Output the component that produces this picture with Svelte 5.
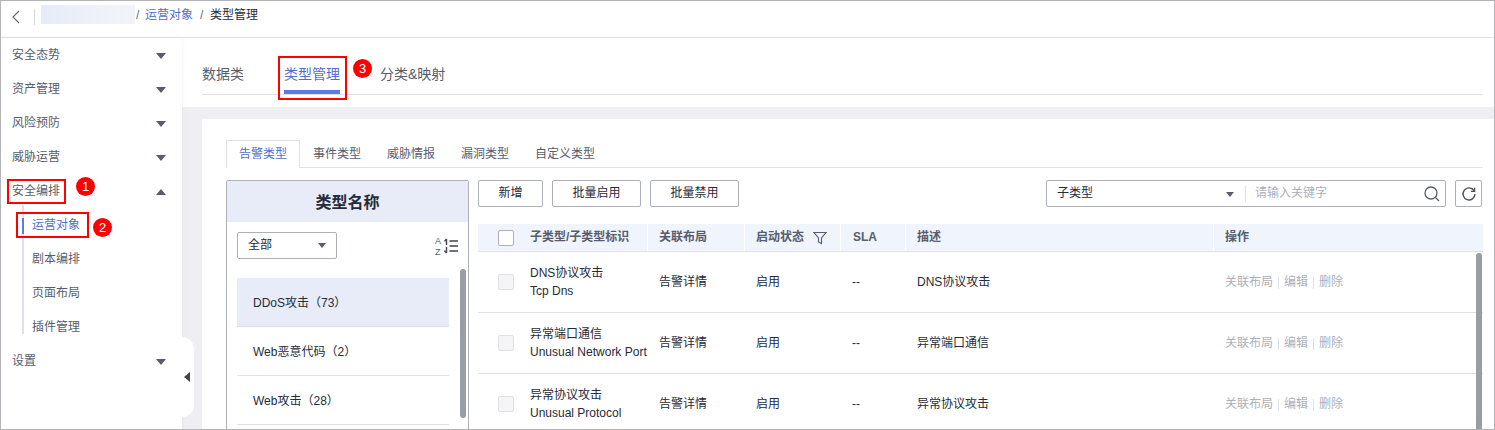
<script>
  const menuTop = ['安全态势', '资产管理', '风险预防', '威胁运营'];
  const sub = ['运营对象', '剧本编排', '页面布局', '插件管理'];
  const tabs = ['告警类型', '事件类型', '威胁情报', '漏洞类型', '自定义类型'];
  const types = ['DDoS攻击（73）', 'Web恶意代码（2）', 'Web攻击（28）'];
  const rows = [
    ['DNS协议攻击', 'Tcp Dns'],
    ['异常端口通信', 'Unusual Network Port'],
    ['异常协议攻击', 'Unusual Protocol']
  ];
</script>

<div class="page">
  <header class="crumb">
    <svg class="back" width="10" height="14" viewBox="0 0 10 14"><path d="M8 1 2 7l6 6" fill="none" stroke="#6b6f78" stroke-width="1.2"/></svg>
    <span class="vline"></span>
    <span class="blur"></span>
    <span class="sep">/</span>
    <span class="link">运营对象</span>
    <span class="sep two">/</span>
    <span class="cur">类型管理</span>
  </header>

  <div class="body">
    <nav class="side">
      {#each menuTop as m}
        <div class="item"><span>{m}</span><i class="tri"></i></div>
      {/each}
      <div class="item"><span>安全编排</span><i class="tri up"></i></div>
      <div class="subs">
        {#each sub as s, i}
          <div class="sub" class:on={i === 0}>{s}</div>
        {/each}
      </div>
      <div class="item"><span>设置</span><i class="tri"></i></div>
      <div class="handle"><i></i></div>
    </nav>

    <main class="main">
      <section class="topbar">
        <div class="toptabs">
          <span class="tt">数据类</span>
          <span class="tt on">类型管理</span>
          <span class="tt">分类&amp;映射</span>
        </div>
      </section>

      <section class="card">
        <div class="tabs">
          {#each tabs as t, i}
            <span class="tab" class:on={i === 0}>{t}</span>
          {/each}
        </div>

        <div class="split">
          <aside class="panel">
            <div class="ptitle">类型名称</div>
            <div class="pbar">
              <div class="select"><span>全部</span><i class="tri small"></i></div>
              <svg width="24" height="20" viewBox="0 0 24 20">
                <text x="1" y="8" font-size="9" fill="#575d6c" font-family="Liberation Sans">A</text>
                <text x="1" y="19" font-size="9" fill="#575d6c" font-family="Liberation Sans">Z</text>
                <path d="M12.5 3v6M12.5 11v6" stroke="#40444d" stroke-width="1.4"/>
                <path d="M12.5 3l-2 2.4M12.5 17l-2-2.4" stroke="#40444d" stroke-width="1.4" fill="none"/>
                <path d="M15.5 5h8.5M15.5 10h8.5M15.5 15h8.5" stroke="#40444d" stroke-width="1.6"/>
              </svg>
            </div>
            <div class="plist">
              {#each types as t, i}
                <div class="ptype" class:on={i === 0}>{t}</div>
              {/each}
              <div class="pscroll"></div>
            </div>
          </aside>

          <div class="content">
            <div class="tools">
              <button class="btn b1">新增</button>
              <button class="btn b2">批量启用</button>
              <button class="btn b2">批量禁用</button>
              <div class="search">
                <div class="stype"><span>子类型</span><i class="tri small"></i></div>
                <span class="ph">请输入关键字</span>
                <svg width="20" height="20" viewBox="0 0 20 20"><circle cx="9" cy="9" r="6" fill="none" stroke="#575d6c" stroke-width="1.3"/><path d="m13.5 13.5 3.5 3.5" stroke="#575d6c" stroke-width="1.3"/></svg>
              </div>
              <button class="btn refresh" aria-label="刷新">
                <svg width="16" height="16" viewBox="0 0 16 16"><path d="M13 4.6A6 6 0 1 0 14 8" fill="none" stroke="#4a4e57" stroke-width="1.4"/><path d="M13.6 1.8v3.6H10" fill="none" stroke="#4a4e57" stroke-width="1.3"/></svg>
              </button>
            </div>

            <div class="table">
              <div class="row head">
                <div class="c c1"><span class="check white"></span><span>子类型/子类型标识</span></div>
                <div class="c">关联布局</div>
                <div class="c">启动状态
                  <svg class="funnel" width="14" height="14" viewBox="0 0 14 14"><path d="M1 1.5h12L8.5 7v5.5l-3-1.5V7z" fill="none" stroke="#575d6c" stroke-width="1.1"/></svg>
                </div>
                <div class="c sla">SLA</div>
                <div class="c">描述</div>
                <div class="c">操作</div>
              </div>
              {#each rows as r}
                <div class="row">
                  <div class="c c1"><span class="check"></span><span class="two-l"><span>{r[0]}</span><span>{r[1]}</span></span></div>
                  <div class="c">告警详情</div>
                  <div class="c">启用</div>
                  <div class="c">--</div>
                  <div class="c">{r[0]}</div>
                  <div class="c ops"><span>关联布局</span><b></b><span>编辑</span><b></b><span>删除</span></div>
                </div>
              {/each}
              <div class="tscroll"></div>
            </div>
          </div>
        </div>
      </section>
    </main>
  </div>

  <span class="mark m1"></span><span class="dot d1">1</span>
  <span class="mark m2"></span><span class="dot d2">2</span>
  <span class="mark m3"></span><span class="dot d3">3</span>
</div>

<style>
  :global(body) { margin: 0; }
  .page {
    position: relative; box-sizing: border-box; width: 1495px; height: 430px; overflow: hidden;
    border: 1px solid #b4b4b8; background: #fff; color: #252b3a;
    font: 12px/1.3 "Liberation Sans", "Noto Sans CJK SC", sans-serif;
  }
  i { display: block; }

  .crumb { height: 37px; box-sizing: border-box; display: flex; align-items: center; border-bottom: 1px solid #dfe1e6; padding-bottom: 7px; }
  .back { margin-left: 10px; margin-top: 2px; }
  .vline { width: 1px; height: 16px; background: #d5d7dc; margin-left: 13px; margin-top: 2px; }
  .blur { width: 94px; height: 19px; margin-left: 6px; margin-top: -2px; background: linear-gradient(90deg, #e6ebf7, #eef1f9 60%, #f3f4fa); }
  .sep { color: #6b6f78; margin-left: 1px; width: 9px; }
  .link { color: #526ecc; }
  .two { margin-left: 7px; width: 10px; }
  .cur { color: #252b3a; }

  .body { display: flex; height: 391px; }
  .side { position: relative; width: 181px; flex: none; background: #fff; box-shadow: 1px 0 3px rgba(0, 0, 0, .04); padding-top: 1px; box-sizing: border-box; }
  .item { height: 34px; display: flex; align-items: center; justify-content: space-between; padding: 0 16px 0 11px; color: #575d6c; }
  .tri { width: 0; height: 0; border-left: 5px solid transparent; border-right: 5px solid transparent; border-top: 6px solid #575d6c; }
  .tri.up { border-top: 0; border-bottom: 6px solid #575d6c; }
  .tri.small { border-left-width: 4px; border-right-width: 4px; border-top-width: 5px; }
  .subs { position: relative; margin-left: 21px; padding-left: 2px; }
  .subs::before { content: ""; position: absolute; left: 0; top: -4px; bottom: 11px; width: 2px; background: #dfe1e6; }
  .sub { height: 34px; display: flex; align-items: center; padding-left: 8px; color: #575d6c; position: relative; }
  .sub.on { color: #526ecc; }
  .sub.on::before { content: ""; position: absolute; left: -2px; top: 9px; width: 2px; height: 16px; background: #5e7ce0; }
  .handle { position: absolute; left: 181px; top: 299px; width: 12px; height: 80px; background: #fff; border-radius: 0 12px 12px 0; display: flex; align-items: center; }
  .handle i { border-top: 5px solid transparent; border-bottom: 5px solid transparent; border-right: 6px solid #40444d; margin-left: 2px; }

  .main { flex: 1; min-width: 0; background: #eeeef3; }
  .topbar { height: 69px; background: #fff; padding: 0 11px 0 20px; box-sizing: border-box; }
  .toptabs { height: 57px; display: flex; align-items: flex-end; border-bottom: 1px solid #dfe1e6; box-sizing: border-box; gap: 40px; }
  .tt { font-size: 14px; height: 32px; padding-top: 3px; color: #575d6c; box-sizing: border-box; }
  .tt.on { color: #526ecc; border-bottom: 4px solid #5e7ce0; }

  .card { background: #fff; margin: 12px 0 0 20px; height: 400px; padding: 21px 11px 0 24px; }
  .tabs { display: flex; height: 28px; border-bottom: 1px solid #dfe1e6; box-sizing: border-box; }
  .tab { padding: 0 12px; height: 28px; box-sizing: border-box; line-height: 27px; color: #575d6c; border: 1px solid transparent; border-bottom: 0; }
  .tab.on { color: #526ecc; background: #fff; border-color: #dfe1e6; position: relative; }

  .split { display: flex; margin-top: 12px; }
  .panel { width: 243px; flex: none; box-sizing: border-box; height: 300px; border: 1px solid #adb0b8; border-radius: 2px 2px 0 0; margin-right: 9px; }
  .ptitle { height: 41px; line-height: 43px; background: #e8ecf8; text-align: center; font-size: 16px; font-weight: 700; color: #252b3a; }
  .pbar { display: flex; justify-content: space-between; align-items: center; padding: 0 10px; margin-top: 10px; height: 27px; }
  .select { width: 100px; height: 27px; box-sizing: border-box; border: 1px solid #adb0b8; border-radius: 2px; display: flex; justify-content: space-between; align-items: center; padding: 0 10px; color: #252b3a; }
  .plist { position: relative; margin: 19px 0 0 10px; width: 212px; }
  .ptype { height: 48px; line-height: 50px; padding-left: 16px; border-bottom: 1px solid #dfe1e6; color: #252b3a; text-spacing-trim: space-all; }
  .ptype.on { background: #e8ecf8; }
  .pscroll { position: absolute; left: 223px; top: -9px; width: 6px; height: 149px; border-radius: 3px; background: #9a9da5; }

  .content { flex: 1; min-width: 0; }
  .tools { display: flex; align-items: center; height: 27px; gap: 9px; }
  .btn { box-sizing: border-box; height: 27px; background: #fff; border: 1px solid #adb0b8; border-radius: 2px; font: inherit; color: #252b3a; padding: 1px 0 0; }
  .b1 { width: 65px; }
  .b2 { width: 89px; }
  .search { margin-left: auto; width: 400px; height: 27px; box-sizing: border-box; border: 1px solid #adb0b8; border-radius: 2px; display: flex; align-items: center; }
  .stype { width: 199px; box-sizing: border-box; padding: 1px 11px 0 10px; display: flex; align-items: center; justify-content: space-between; border-right: 1px solid #dfe1e6; height: 16px; }
  .ph { flex: 1; padding: 1px 0 0 9px; color: #adb0b8; }
  .search svg { margin-right: 3px; }
  .refresh { width: 27px; display: flex; align-items: center; justify-content: center; margin-right: 1px; padding: 0; }

  .table { position: relative; margin-top: 17px; }
  .row { display: grid; grid-template-columns: 170px 97px 96px 65px 308px 1fr; height: 61px; align-items: center; border-bottom: 1px solid #dfe1e6; box-sizing: border-box; color: #252b3a; }
  .row.head { height: 28px; background: #f0f4fc; color: #575d6c; font-weight: 700; }
  .row.head .c { height: 100%; display: flex; align-items: center; padding-top: 0; border-right: 1px solid #fff; box-sizing: border-box; }
  .row.head .c:last-child { border-right: 0; }
  .c { padding: 2px 0 0 11px; min-width: 0; white-space: nowrap; }
  .c.c1 { display: flex; align-items: center; padding: 0 0 0 20px; gap: 16px; }
  .row.head .sla { color: #575d6c; padding-left: 12px; }
  .funnel { margin-left: 9px; }
  .check { width: 14px; height: 14px; border: 1px solid #dfe1e6; background: #f5f5f6; border-radius: 2px; flex: none; }
  .check.white { background: #fff; border-color: #adb0b8; }
  .two-l { display: flex; flex-direction: column; line-height: 18px; margin-top: -1px; }
  .ops { display: flex; align-items: center; color: #adb0b8; }
  .ops b { width: 1px; height: 12px; background: #dfe1e6; margin: 0 5px; }
  .tscroll { position: absolute; right: 1px; top: 29px; width: 6px; height: 180px; border-radius: 3px; background: #9a9da5; }

  .mark { position: absolute; border: 2px solid #f00; box-sizing: border-box; }
  .m1 { left: 6px; top: 178px; width: 59px; height: 25px; }
  .m2 { left: 15px; top: 211px; width: 73px; height: 26px; }
  .m3 { left: 277px; top: 55px; width: 69px; height: 44px; }
  .dot { position: absolute; width: 19px; height: 19px; border-radius: 50%; background: #f00; color: #fff; text-align: center; font: 13px/19px "Liberation Sans", sans-serif; }
  .d1 { left: 75px; top: 176px; }
  .d2 { left: 92px; top: 217px; }
  .d3 { left: 352px; top: 58px; }
</style>
